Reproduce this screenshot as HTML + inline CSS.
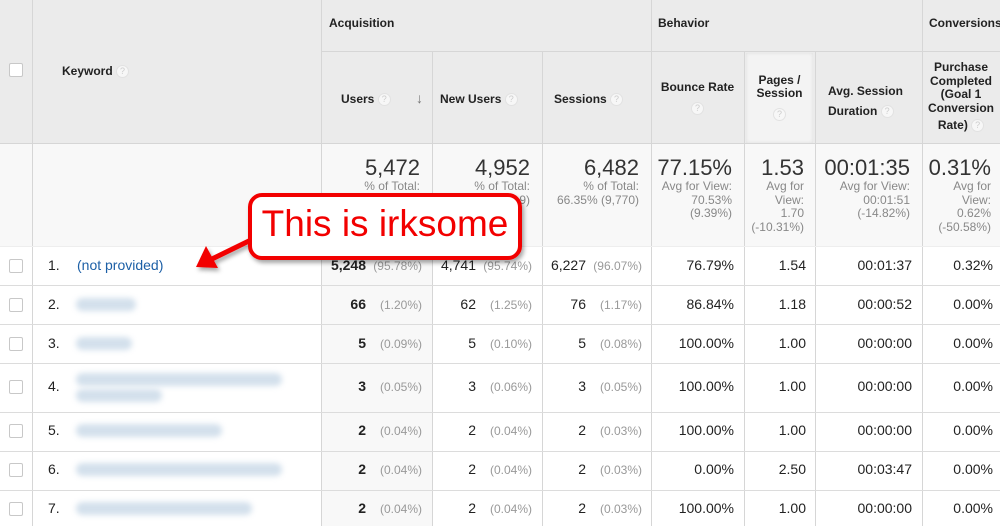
<!DOCTYPE html>
<html><head><meta charset="utf-8"><style>
*{margin:0;padding:0;box-sizing:border-box}
body{width:1000px;height:526px;overflow:hidden;background:#fff;font-family:"Liberation Sans",sans-serif;color:#222;position:relative}
.a{position:absolute}
.vl{position:absolute;width:1px;background:#d6d6d6}
.hl{position:absolute;height:1px;background:#dcdcdc}
.h{position:absolute;font-weight:bold;font-size:12px;color:#222;line-height:13px}
.q{display:inline-block;width:13px;height:13px;border-radius:50%;background:#f7f7f7;border:1px solid #e2e2e2;color:#ccc;font-size:9px;text-align:center;line-height:11px;font-weight:normal;vertical-align:middle}
.cb{position:absolute;left:9px;width:14px;height:14px;border:1px solid #c8c8c8;border-radius:2px;background:#fff}
.big{position:absolute;font-size:22px;color:#333;text-align:right}
.sm{position:absolute;font-size:12px;color:#888;text-align:right;line-height:13.5px}
.r{position:absolute;font-size:14px;text-align:right;color:#222}
.p{color:#999;font-size:12px;margin-top:2px}
.blur{position:absolute;background:#d3e0ec;border-radius:7px;filter:blur(3px);height:13px}
</style></head><body>
<div class="a" style="left:0;top:0;width:1000px;height:144px;background:#ebebeb"></div>
<div class="a" style="left:0;top:144px;width:1000px;height:102px;background:#f8f8f8"></div>
<div class="a" style="left:321px;top:246px;width:111px;height:280px;background:#f8f8f8"></div>
<div class="a" style="left:746px;top:53px;width:67px;height:90px;background:#f3f3f3;box-shadow:inset 0 0 3px #ddd"></div>
<div class="vl" style="left:32px;top:0;height:526px"></div>
<div class="vl" style="left:321px;top:0;height:526px"></div>
<div class="vl" style="left:432px;top:51px;height:475px"></div>
<div class="vl" style="left:542px;top:51px;height:475px"></div>
<div class="vl" style="left:651px;top:0;height:526px"></div>
<div class="vl" style="left:744px;top:51px;height:475px"></div>
<div class="vl" style="left:815px;top:51px;height:475px"></div>
<div class="vl" style="left:922px;top:0;height:526px"></div>
<div class="hl" style="left:321px;top:51px;width:679px;background:#d6d6d6"></div>
<div class="hl" style="left:0;top:143px;width:1000px;background:#d6d6d6"></div>
<div class="hl" style="left:0;top:246px;width:1000px;background:#eee"></div>
<div class="hl" style="left:0;top:285px;width:1000px"></div>
<div class="hl" style="left:0;top:324px;width:1000px"></div>
<div class="hl" style="left:0;top:363px;width:1000px"></div>
<div class="hl" style="left:0;top:412px;width:1000px"></div>
<div class="hl" style="left:0;top:451px;width:1000px"></div>
<div class="hl" style="left:0;top:490px;width:1000px"></div>
<div class="cb" style="top:63px"></div>
<div class="h" style="left:62px;top:65px">Keyword <span class="q">?</span></div>
<div class="h" style="left:329px;top:17px">Acquisition</div>
<div class="h" style="left:658px;top:17px">Behavior</div>
<div class="h" style="left:929px;top:17px">Conversions</div>
<div class="h" style="left:341px;top:93px">Users <span class="q">?</span></div>
<div class="a" style="left:416px;top:90px;color:#777;font-size:14px;font-weight:bold">↓</div>
<div class="h" style="left:440px;top:93px">New Users <span class="q">?</span></div>
<div class="h" style="left:554px;top:93px">Sessions <span class="q">?</span></div>
<div class="h" style="left:651px;top:81px;width:93px;text-align:center">Bounce Rate<br><span class="q" style="margin-top:8px">?</span></div>
<div class="h" style="left:744px;top:74px;width:71px;text-align:center">Pages /<br>Session<br><span class="q" style="margin-top:8px">?</span></div>
<div class="h" style="left:828px;top:81px;line-height:20px">Avg. Session<br>Duration <span class="q">?</span></div>
<div class="h" style="left:922px;top:61px;width:78px;text-align:center;line-height:13.5px">Purchase<br>Completed<br>(Goal 1<br>Conversion<br><span style="line-height:20px">Rate)</span> <span class="q">?</span></div>
<div class="big" style="right:580px;top:155px">5,472</div>
<div class="sm" style="right:580px;top:180px">% of Total:</div>
<div class="big" style="right:470px;top:155px">4,952</div>
<div class="sm" style="right:470px;top:180px">% of Total:<br>(99.9)</div>
<div class="big" style="right:361px;top:155px">6,482</div>
<div class="sm" style="right:361px;top:180px">% of Total:<br>66.35% (9,770)</div>
<div class="big" style="right:268px;top:155px">77.15%</div>
<div class="sm" style="right:268px;top:180px">Avg for View:<br>70.53%<br>(9.39%)</div>
<div class="big" style="right:196px;top:155px">1.53</div>
<div class="sm" style="right:196px;top:180px">Avg for<br>View:<br>1.70<br>(-10.31%)</div>
<div class="big" style="right:90px;top:155px">00:01:35</div>
<div class="sm" style="right:90px;top:180px">Avg for View:<br>00:01:51<br>(-14.82%)</div>
<div class="big" style="right:9px;top:155px">0.31%</div>
<div class="sm" style="right:9px;top:180px">Avg for<br>View:<br>0.62%<br>(-50.58%)</div>
<div class="cb" style="top:259px"></div><div class="cb" style="top:298px"></div><div class="cb" style="top:337px"></div><div class="cb" style="top:380px"></div><div class="cb" style="top:424px"></div><div class="cb" style="top:463px"></div><div class="cb" style="top:502px"></div>
<div class="a" style="left:48px;top:257px;font-size:14px">1.</div>
<div class="a" style="left:77px;top:257px;font-size:14px;color:#1c5fa6">(not provided)</div>
<div class="a" style="left:48px;top:296px;font-size:14px">2.</div><div class="blur" style="left:76px;top:298px;width:60px"></div>
<div class="a" style="left:48px;top:335px;font-size:14px">3.</div><div class="blur" style="left:76px;top:337px;width:56px"></div>
<div class="a" style="left:48px;top:378px;font-size:14px">4.</div><div class="blur" style="left:76px;top:373px;width:206px"></div><div class="blur" style="left:76px;top:389px;width:86px"></div>
<div class="a" style="left:48px;top:422px;font-size:14px">5.</div><div class="blur" style="left:76px;top:424px;width:146px"></div>
<div class="a" style="left:48px;top:461px;font-size:14px">6.</div><div class="blur" style="left:76px;top:463px;width:206px"></div>
<div class="a" style="left:48px;top:500px;font-size:14px">7.</div><div class="blur" style="left:76px;top:502px;width:176px"></div>

<div class="r" style="right:634px;top:257px;font-weight:bold">5,248</div><div class="r p" style="right:578px;top:257px">(95.78%)</div>
<div class="r" style="right:524px;top:257px">4,741</div><div class="r p" style="right:468px;top:257px">(95.74%)</div>
<div class="r" style="right:414px;top:257px">6,227</div><div class="r p" style="right:358px;top:257px">(96.07%)</div>
<div class="r" style="right:266px;top:257px">76.79%</div><div class="r" style="right:194px;top:257px">1.54</div><div class="r" style="right:88px;top:257px">00:01:37</div><div class="r" style="right:7px;top:257px">0.32%</div>

<div class="r" style="right:634px;top:296px;font-weight:bold">66</div><div class="r p" style="right:578px;top:296px">(1.20%)</div>
<div class="r" style="right:524px;top:296px">62</div><div class="r p" style="right:468px;top:296px">(1.25%)</div>
<div class="r" style="right:414px;top:296px">76</div><div class="r p" style="right:358px;top:296px">(1.17%)</div>
<div class="r" style="right:266px;top:296px">86.84%</div><div class="r" style="right:194px;top:296px">1.18</div><div class="r" style="right:88px;top:296px">00:00:52</div><div class="r" style="right:7px;top:296px">0.00%</div>

<div class="r" style="right:634px;top:335px;font-weight:bold">5</div><div class="r p" style="right:578px;top:335px">(0.09%)</div>
<div class="r" style="right:524px;top:335px">5</div><div class="r p" style="right:468px;top:335px">(0.10%)</div>
<div class="r" style="right:414px;top:335px">5</div><div class="r p" style="right:358px;top:335px">(0.08%)</div>
<div class="r" style="right:266px;top:335px">100.00%</div><div class="r" style="right:194px;top:335px">1.00</div><div class="r" style="right:88px;top:335px">00:00:00</div><div class="r" style="right:7px;top:335px">0.00%</div>

<div class="r" style="right:634px;top:378px;font-weight:bold">3</div><div class="r p" style="right:578px;top:378px">(0.05%)</div>
<div class="r" style="right:524px;top:378px">3</div><div class="r p" style="right:468px;top:378px">(0.06%)</div>
<div class="r" style="right:414px;top:378px">3</div><div class="r p" style="right:358px;top:378px">(0.05%)</div>
<div class="r" style="right:266px;top:378px">100.00%</div><div class="r" style="right:194px;top:378px">1.00</div><div class="r" style="right:88px;top:378px">00:00:00</div><div class="r" style="right:7px;top:378px">0.00%</div>

<div class="r" style="right:634px;top:422px;font-weight:bold">2</div><div class="r p" style="right:578px;top:422px">(0.04%)</div>
<div class="r" style="right:524px;top:422px">2</div><div class="r p" style="right:468px;top:422px">(0.04%)</div>
<div class="r" style="right:414px;top:422px">2</div><div class="r p" style="right:358px;top:422px">(0.03%)</div>
<div class="r" style="right:266px;top:422px">100.00%</div><div class="r" style="right:194px;top:422px">1.00</div><div class="r" style="right:88px;top:422px">00:00:00</div><div class="r" style="right:7px;top:422px">0.00%</div>

<div class="r" style="right:634px;top:461px;font-weight:bold">2</div><div class="r p" style="right:578px;top:461px">(0.04%)</div>
<div class="r" style="right:524px;top:461px">2</div><div class="r p" style="right:468px;top:461px">(0.04%)</div>
<div class="r" style="right:414px;top:461px">2</div><div class="r p" style="right:358px;top:461px">(0.03%)</div>
<div class="r" style="right:266px;top:461px">0.00%</div><div class="r" style="right:194px;top:461px">2.50</div><div class="r" style="right:88px;top:461px">00:03:47</div><div class="r" style="right:7px;top:461px">0.00%</div>

<div class="r" style="right:634px;top:500px;font-weight:bold">2</div><div class="r p" style="right:578px;top:500px">(0.04%)</div>
<div class="r" style="right:524px;top:500px">2</div><div class="r p" style="right:468px;top:500px">(0.04%)</div>
<div class="r" style="right:414px;top:500px">2</div><div class="r p" style="right:358px;top:500px">(0.03%)</div>
<div class="r" style="right:266px;top:500px">100.00%</div><div class="r" style="right:194px;top:500px">1.00</div><div class="r" style="right:88px;top:500px">00:00:00</div><div class="r" style="right:7px;top:500px">0.00%</div>

<svg class="a" style="left:0;top:0" width="1000" height="526">
<defs><filter id="s" x="-20%" y="-20%" width="140%" height="160%"><feDropShadow dx="2" dy="3" stdDeviation="2" flood-color="#000" flood-opacity="0.35"/></filter></defs>
<g filter="url(#s)">
<line x1="255" y1="238" x2="212" y2="259" stroke="#f20000" stroke-width="5"/>
<polygon points="196,267 206,246 218,268" fill="#f20000"/>
<rect x="250" y="195" width="270" height="63" rx="12" fill="#fff" stroke="#f20000" stroke-width="4"/>
</g>
</svg>
<div class="a" style="left:250px;top:203px;width:270px;text-align:center;font-size:37px;color:#f20000">This is irksome</div>
</body></html>
